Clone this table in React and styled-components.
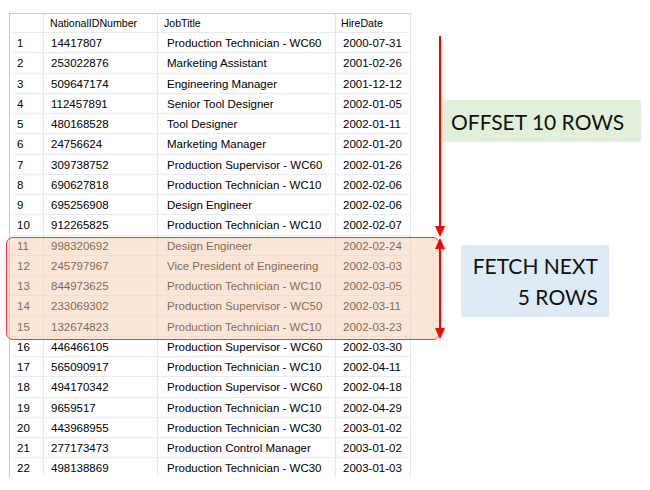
import React from "react";
import styled, { createGlobalStyle } from "styled-components";

const Global = createGlobalStyle`
  html, body { margin: 0; padding: 0; background: #ffffff; }
  body { width: 650px; height: 490px; overflow: hidden; }
`;

const rows = [
  [1, "14417807", "Production Technician - WC60", "2000-07-31"],
  [2, "253022876", "Marketing Assistant", "2001-02-26"],
  [3, "509647174", "Engineering Manager", "2001-12-12"],
  [4, "112457891", "Senior Tool Designer", "2002-01-05"],
  [5, "480168528", "Tool Designer", "2002-01-11"],
  [6, "24756624", "Marketing Manager", "2002-01-20"],
  [7, "309738752", "Production Supervisor - WC60", "2002-01-26"],
  [8, "690627818", "Production Technician - WC10", "2002-02-06"],
  [9, "695256908", "Design Engineer", "2002-02-06"],
  [10, "912265825", "Production Technician - WC10", "2002-02-07"],
  [11, "998320692", "Design Engineer", "2002-02-24"],
  [12, "245797967", "Vice President of Engineering", "2002-03-03"],
  [13, "844973625", "Production Technician - WC10", "2002-03-05"],
  [14, "233069302", "Production Supervisor - WC50", "2002-03-11"],
  [15, "132674823", "Production Technician - WC10", "2002-03-23"],
  [16, "446466105", "Production Supervisor - WC60", "2002-03-30"],
  [17, "565090917", "Production Technician - WC10", "2002-04-11"],
  [18, "494170342", "Production Supervisor - WC60", "2002-04-18"],
  [19, "9659517", "Production Technician - WC10", "2002-04-29"],
  [20, "443968955", "Production Technician - WC30", "2003-01-02"],
  [21, "277173473", "Production Control Manager", "2003-01-02"],
  [22, "498138869", "Production Technician - WC30", "2003-01-03"],
];

const Stage = styled.div`
  position: relative;
  width: 650px;
  height: 490px;
  padding: 13px 0 0 9px;
  box-sizing: border-box;
`;

const Grid = styled.div`
  display: grid;
  grid-template-columns: 34px 114px 178px 75px;
  grid-auto-rows: 20.25px;
  grid-template-rows: 19px;
  width: 402px;
  height: 465px;
  overflow: hidden;
  border-top: 1px solid #c9ccd1;
  border-left: 1px solid #c9ccd1;
  box-sizing: border-box;
  font-family: "Liberation Sans", Arial, sans-serif;
  color: #000;
`;

const Cell = styled.div`
  box-sizing: border-box;
  border-right: 1px solid #e3e8f0;
  border-bottom: 1px solid #e8ecf2;
  padding-left: ${(p) => p.$pad}px;
  font-size: ${(p) => (p.$head ? "10.6px" : "11.5px")};
  line-height: ${(p) => (p.$head ? "18px" : "20px")};
  white-space: nowrap;
  overflow: hidden;
`;

const Highlight = styled.div`
  position: absolute;
  left: 6px;
  top: 237px;
  width: 434px;
  height: 103px;
  box-sizing: border-box;
  border: 1.5px solid #ee3b3b;
  border-radius: 7px;
  background: rgba(248, 203, 173, 0.5);
`;

const Arrows = styled.svg`
  position: absolute;
  left: 0;
  top: 0;
  pointer-events: none;
`;

const Label = styled.div`
  position: absolute;
  left: ${(p) => p.$x}px;
  top: ${(p) => p.$y}px;
  width: ${(p) => p.$w}px;
  height: ${(p) => p.$h}px;
  box-sizing: border-box;
  background: ${(p) => p.$bg};
  font-family: "Lato", "Open Sans", sans-serif;
  font-size: 21px;
  color: #111;
  display: flex;
  flex-direction: column;
  justify-content: center;
  align-items: ${(p) => (p.$right ? "flex-end" : "flex-start")};
  padding: ${(p) => (p.$right ? "0 11px 0 0" : "0 0 0 9px")};
  line-height: 31px;
  text-align: ${(p) => (p.$right ? "right" : "left")};
`;

const pads = [7, 7, 9, 7];

export default function App() {
  return (
    <>
      <Global />
      <Stage>
        <Grid>
          <Cell $head $pad={7}></Cell>
          <Cell $head $pad={6}>NationalIDNumber</Cell>
          <Cell $head $pad={6}>JobTitle</Cell>
          <Cell $head $pad={5}>HireDate</Cell>
          {rows.map((r) =>
            r.map((v, i) => (
              <Cell key={r[0] + "-" + i} $pad={pads[i]}>
                {v}
              </Cell>
            ))
          )}
        </Grid>
        <Highlight />
        <Arrows width="650" height="490" viewBox="0 0 650 490">
          <line x1="440" y1="36" x2="440" y2="228" stroke="#ff0000" strokeWidth="2" />
          <polygon points="435,226 445,226 440,237" fill="#ff0000" />
          <line x1="440" y1="246" x2="440" y2="330" stroke="#ff0000" strokeWidth="2" />
          <polygon points="435,249 445,249 440,238" fill="#ff0000" />
          <polygon points="435,328 445,328 440,339" fill="#ff0000" />
        </Arrows>
        <Label $x={442} $y={100} $w={199} $h={42} $bg="#e2efda">
          OFFSET 10 ROWS
        </Label>
        <Label $x={461} $y={245} $w={148} $h={72} $bg="#deebf7" $right>
          <span>FETCH NEXT</span>
          <span>5 ROWS</span>
        </Label>
      </Stage>
    </>
  );
}
